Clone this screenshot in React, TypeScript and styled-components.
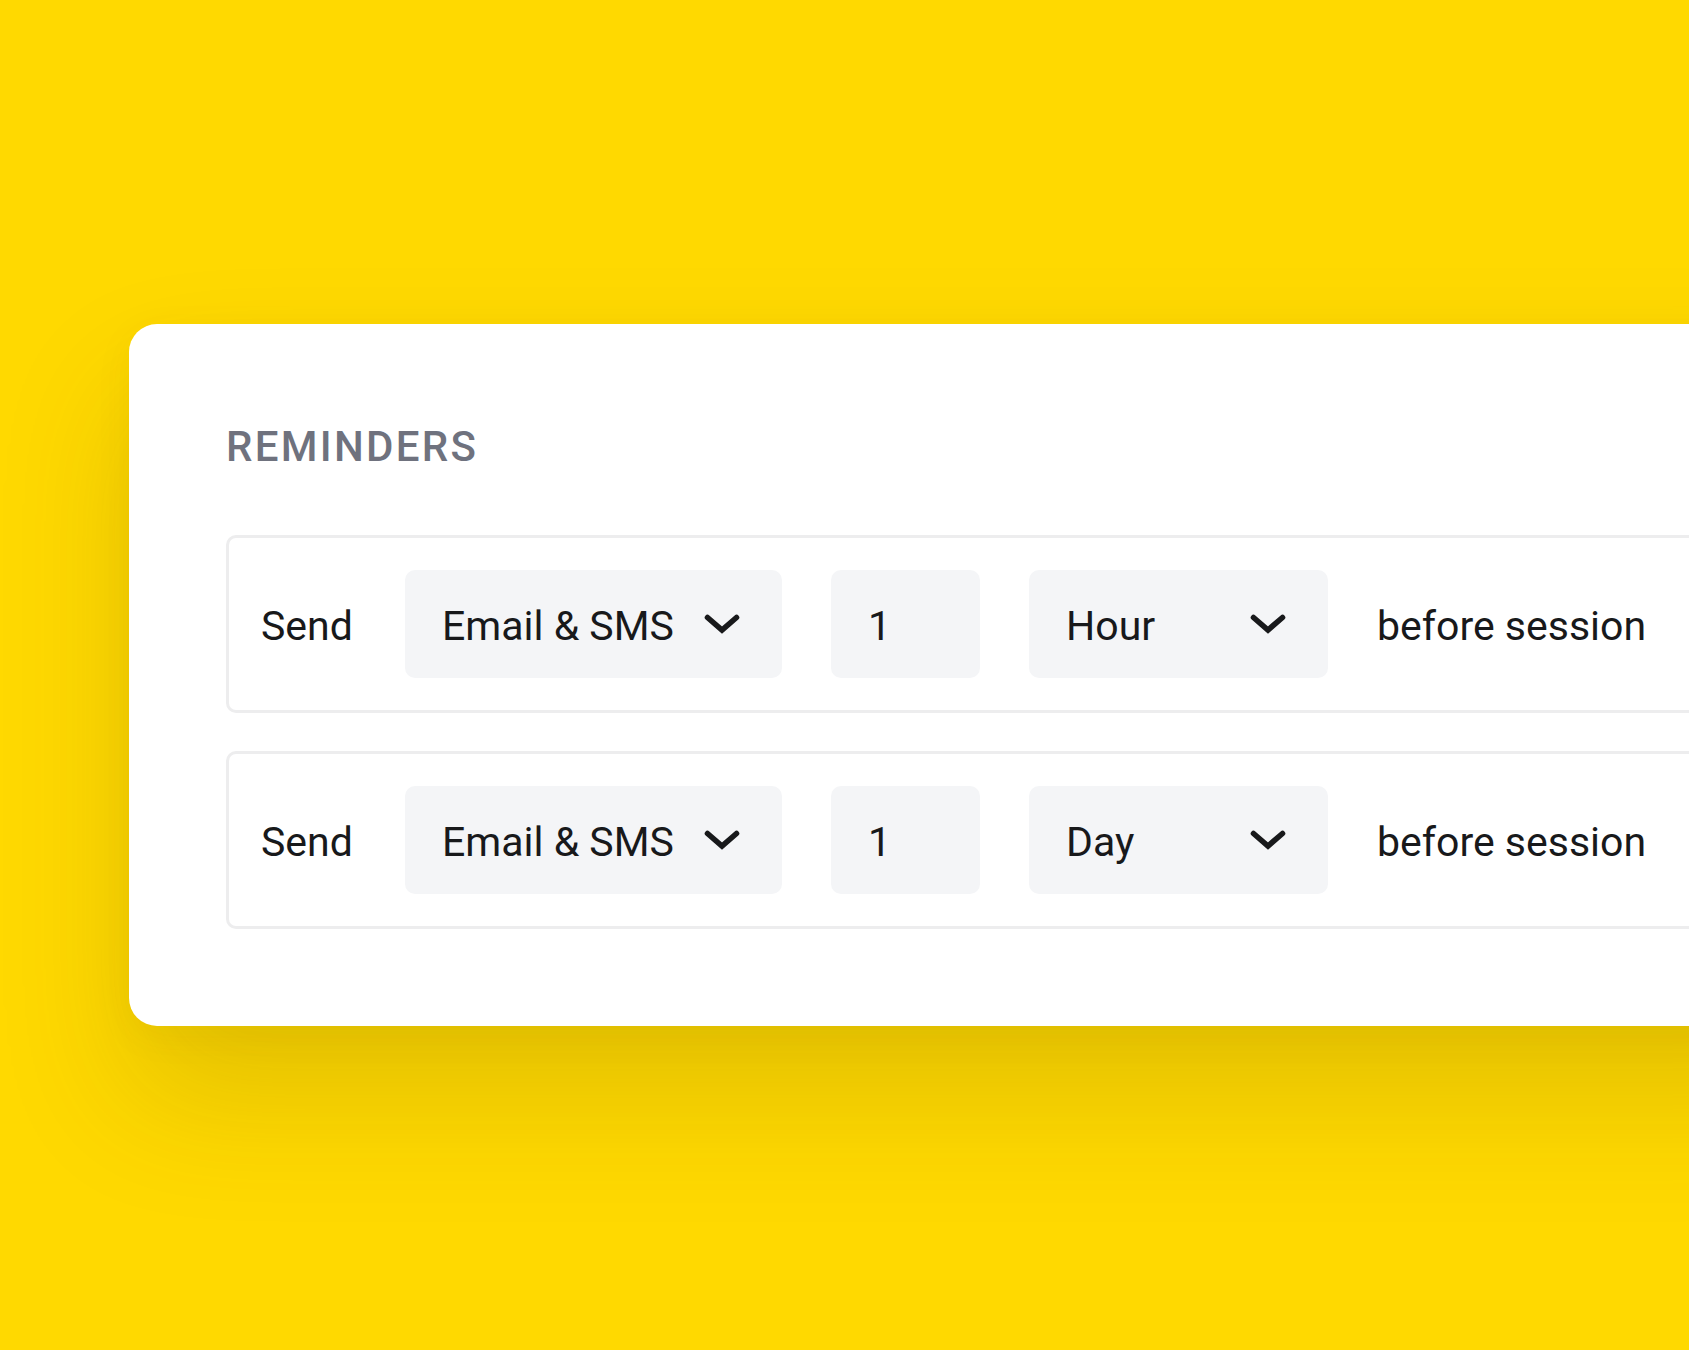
import React from "react";
import styled, { createGlobalStyle } from "styled-components";

const GlobalStyle = createGlobalStyle`
  html, body {
    margin: 0;
    padding: 0;
    background: #ffd900;
    overflow: hidden;
  }
  body {
    font-family: Roboto, "Liberation Sans", sans-serif;
  }
`;

const StyledPage = styled.div`
  width: 1689px;
  height: 1350px;
  background: #ffd900;
  padding: 324px 0 0 129px;
  box-sizing: border-box;
  overflow: hidden;
`;

const StyledCard = styled.section`
  width: 1700px;
  background: #ffffff;
  border-radius: 28px 0 0 28px;
  padding: 102px 0 97px 97px;
  box-sizing: border-box;
  box-shadow: 0 70px 130px rgba(90, 70, 0, 0.17), 0 10px 40px rgba(90, 70, 0, 0.05);
`;

const StyledTitle = styled.h2`
  margin: 0 0 67px 0;
  font-family: Roboto, "Liberation Sans", sans-serif;
  font-size: 42px;
  line-height: 42px;
  font-weight: 500;
  letter-spacing: 2.3px;
  color: #6f727e;
`;

const StyledList = styled.div`
  display: flex;
  flex-direction: column;
  gap: 38px;
`;

const StyledRow = styled.div`
  display: flex;
  align-items: center;
  gap: 49px;
  padding: 32px 0 32px 32px;
  border: 3px solid #ededee;
  border-right: none;
  border-radius: 10px 0 0 10px;
`;

const StyledText = styled.span<{ $width?: number }>`
  padding-top: 4px;
  font-size: 41px;
  color: #18191b;
  white-space: nowrap;
  ${(p) => (p.$width ? `width: ${p.$width}px;` : "")}
`;

const StyledField = styled.div<{ $width: number }>`
  display: flex;
  align-items: center;
  justify-content: space-between;
  width: ${(p) => p.$width}px;
  height: 108px;
  padding: 4px 42px 0 37px;
  box-sizing: border-box;
  background: #f4f5f7;
  border-radius: 10px;
  font-size: 41px;
  color: #18191b;
  white-space: nowrap;

  svg {
    margin-top: -4px;
  }
`;

function Chevron() {
  return (
    <svg width="36" height="20" viewBox="0 0 36 20" fill="none">
      <polyline
        points="3.5,3.5 18,16 32.5,3.5"
        stroke="#18191b"
        strokeWidth="5.6"
        strokeLinecap="round"
        strokeLinejoin="miter"
      />
    </svg>
  );
}

type ReminderProps = {
  channel: string;
  amount: string;
  unit: string;
};

function ReminderRow({ channel, amount, unit }: ReminderProps) {
  return (
    <StyledRow>
      <StyledText $width={95}>Send</StyledText>
      <StyledField $width={377}>
        {channel}
        <Chevron />
      </StyledField>
      <StyledField $width={149}>{amount}</StyledField>
      <StyledField $width={299}>
        {unit}
        <Chevron />
      </StyledField>
      <StyledText>before session</StyledText>
    </StyledRow>
  );
}

const reminders: ReminderProps[] = [
  { channel: "Email & SMS", amount: "1", unit: "Hour" },
  { channel: "Email & SMS", amount: "1", unit: "Day" },
];

export default function App() {
  return (
    <StyledPage>
      <GlobalStyle />
      <StyledCard>
        <StyledTitle>REMINDERS</StyledTitle>
        <StyledList>
          {reminders.map((r) => (
            <ReminderRow key={r.unit} {...r} />
          ))}
        </StyledList>
      </StyledCard>
    </StyledPage>
  );
}
